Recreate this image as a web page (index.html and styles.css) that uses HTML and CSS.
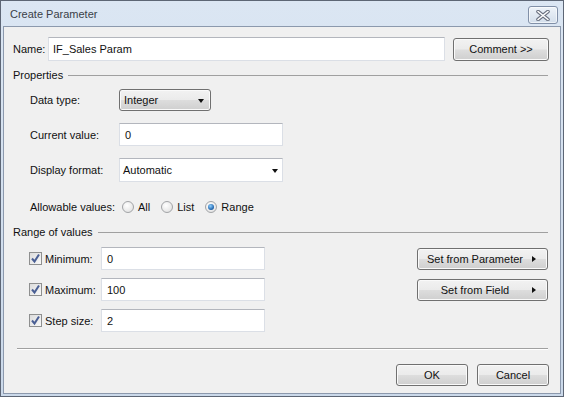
FILE: index.html
```html
<!DOCTYPE html>
<html lang="en">
<head>
  <meta charset="UTF-8" />
  <title>Create Parameter</title>
  <link rel="stylesheet" href="styles.css">
</head>
<body>

  <div class="window">

    <!-- Title bar -->
    <div class="titlebar">
      <span class="title">Create Parameter</span>
      <button class="close-btn">
        <svg width="16" height="11" viewBox="0 0 16 11">
          <path d="M3 1.5 L13 9.5 M13 1.5 L3 9.5" stroke="#6a7180" stroke-width="3.6" stroke-linecap="round" fill="none"/>
          <path d="M3 1.5 L13 9.5 M13 1.5 L3 9.5" stroke="#ffffff" stroke-width="1.6" stroke-linecap="round" fill="none"/>
        </svg>
      </button>
    </div>

    <!-- Dialog body -->
    <div class="client">

      <div class="name-row">
        <label class="name-label">Name:</label>
        <div class="textbox name-input">IF_Sales Param</div>
        <button class="btn comment-btn">Comment &gt;&gt;</button>
      </div>

      <div class="group-head props-head">
        <span>Properties</span>
        <div class="group-line"></div>
      </div>

      <div class="field-row datatype-row">
        <label class="field-label">Data type:</label>
        <div class="combo-btn">Integer<span class="arrow-down"></span></div>
      </div>

      <div class="field-row current-row">
        <label class="field-label">Current value:</label>
        <div class="textbox short">0</div>
      </div>

      <div class="field-row display-row">
        <label class="field-label">Display format:</label>
        <div class="textbox short dropdown">Automatic<span class="arrow-down"></span></div>
      </div>

      <div class="field-row allow-row">
        <label class="field-label">Allowable values:</label>
        <div class="radios">
          <span class="radio"></span><span class="radio-text">All</span>
          <span class="radio"></span><span class="radio-text">List</span>
          <span class="radio checked"></span><span class="radio-text">Range</span>
        </div>
      </div>

      <div class="group-head range-head">
        <span>Range of values</span>
        <div class="group-line"></div>
      </div>

      <div class="range-row first">
        <div class="check-label">
          <span class="checkbox">
            <svg width="11" height="11" viewBox="0 0 11 11"><path d="M2 5.5 L4.5 8.5 L9 1.5" stroke="#4a5f94" stroke-width="2" fill="none"/></svg>
          </span>
          <span>Minimum:</span>
        </div>
        <div class="textbox short">0</div>
        <button class="btn side-btn"><span class="side-text">Set from Parameter</span><span class="arrow-right"></span></button>
      </div>

      <div class="range-row">
        <div class="check-label">
          <span class="checkbox">
            <svg width="11" height="11" viewBox="0 0 11 11"><path d="M2 5.5 L4.5 8.5 L9 1.5" stroke="#4a5f94" stroke-width="2" fill="none"/></svg>
          </span>
          <span>Maximum:</span>
        </div>
        <div class="textbox short">100</div>
        <button class="btn side-btn"><span class="side-text">Set from Field</span><span class="arrow-right"></span></button>
      </div>

      <div class="range-row">
        <div class="check-label">
          <span class="checkbox">
            <svg width="11" height="11" viewBox="0 0 11 11"><path d="M2 5.5 L4.5 8.5 L9 1.5" stroke="#4a5f94" stroke-width="2" fill="none"/></svg>
          </span>
          <span>Step size:</span>
        </div>
        <div class="textbox short">2</div>
      </div>

      <div class="separator"></div>

      <div class="footer">
        <button class="btn footer-btn">OK</button>
        <button class="btn footer-btn">Cancel</button>
      </div>

    </div>
  </div>

</body>
</html>
```

FILE: styles.css
```css
* {
  margin: 0;
  padding: 0;
  box-sizing: border-box;
  font-family: 'Liberation Sans', Arial, sans-serif;
}

body {
  width: 564px;
  height: 397px;
  overflow: hidden;
  background: #f0f0f0;
}

.window {
  width: 564px;
  height: 397px;
  border: 1px solid #5d6675;
  background: linear-gradient(to bottom, #dbe6f3, #cbd9ea);
  padding: 0 2px 2px 2px;
  display: flex;
  flex-direction: column;
}

/* Title bar */
.titlebar {
  height: 25px;
  display: flex;
  align-items: center;
  justify-content: space-between;
  padding: 0 3px 0 7px;
}

.title {
  font-size: 11px;
  color: #3a3f47;
}

.close-btn {
  width: 30px;
  height: 18px;
  margin-top: 3px;
  border: 1px solid #8190a8;
  border-radius: 3px;
  background: linear-gradient(to bottom, #eef3f9, #d3deeb);
  display: flex;
  align-items: center;
  justify-content: center;
  box-shadow: inset 0 0 0 1px rgba(255, 255, 255, 0.6);
}

/* Client area */
.client {
  flex: 1;
  background: #f0f0f0;
  border: 1px solid #8c99ad;
  padding: 0 11px 0 9px;
  font-size: 11px;
  color: #111;
  white-space: nowrap;
}

.name-row {
  margin-top: 10px;
  height: 24px;
  display: flex;
  align-items: center;
}

.name-label {
  width: 35px;
}

.textbox {
  height: 23px;
  background: white;
  border: 1px solid #dbdfe6;
  border-top-color: #b3b6bd;
  padding: 0 5px;
  display: flex;
  align-items: center;
  position: relative;
}

.name-input {
  width: 397px;
  height: 24px;
  padding-left: 4px;
}

.btn {
  font-size: 11px;
  color: #111;
  border: 1px solid #707070;
  border-radius: 3px;
  background: linear-gradient(to bottom, #f2f2f2 0%, #ebebeb 48%, #dddddd 52%, #cfcfcf 100%);
  box-shadow: inset 0 0 0 1px #fafafa;
}

.comment-btn {
  width: 96px;
  height: 23px;
  margin-left: 8px;
}

/* Group headers */
.group-head {
  height: 14px;
  display: flex;
  align-items: center;
  gap: 5px;
}

.group-line {
  flex: 1;
  border-top: 1px solid #a0a0a0;
  margin-right: 1px;
}

.props-head {
  margin-top: 7px;
}

.range-head {
  margin-top: 9px;
}

/* Property rows */
.field-row {
  display: flex;
  align-items: center;
  padding-left: 17px;
}

.field-label {
  width: 89px;
}

.datatype-row {
  margin-top: 7px;
  height: 22px;
}

.combo-btn {
  width: 92px;
  height: 22px;
  border: 1px solid #707070;
  border-radius: 3px;
  background: linear-gradient(to bottom, #f2f2f2 0%, #ebebeb 48%, #dddddd 52%, #cfcfcf 100%);
  box-shadow: inset 0 0 0 1px #fafafa;
  padding-left: 4px;
  display: flex;
  align-items: center;
  position: relative;
}

.arrow-down {
  position: absolute;
  top: 9px;
  right: 6px;
  border-left: 3.5px solid transparent;
  border-right: 3.5px solid transparent;
  border-top: 4px solid #111;
}

.current-row {
  margin-top: 12px;
  height: 23px;
}

.short {
  width: 164px;
}

.display-row {
  margin-top: 12px;
  height: 24px;
}

.dropdown {
  height: 24px;
  padding-left: 3px;
}

.dropdown .arrow-down {
  top: 10px;
  right: 4px;
}

.allow-row {
  margin-top: 16px;
  height: 18px;
}

.radios {
  display: flex;
  align-items: center;
  padding-left: 3px;
}

.radio {
  width: 12px;
  height: 12px;
  border-radius: 50%;
  border: 1px solid #a2a4a7;
  background: radial-gradient(circle at 40% 35%, #ffffff, #dcdcdc);
  margin-right: 4px;
  position: relative;
}

.radio.checked::after {
  content: '';
  position: absolute;
  left: 2px;
  top: 2px;
  width: 6px;
  height: 6px;
  border-radius: 50%;
  background: radial-gradient(circle at 40% 35%, #8fd0ff, #1b5fa8 70%, #15406f);
}

.radio-text {
  margin-right: 11px;
}

/* Range rows */
.range-row {
  height: 23px;
  margin-top: 8px;
  display: flex;
  align-items: center;
  padding-left: 16px;
}

.check-label {
  width: 72px;
  display: flex;
  align-items: center;
  gap: 3px;
}

.checkbox {
  width: 13px;
  height: 13px;
  border: 1px solid #8e8f8f;
  background: linear-gradient(to bottom right, #dcdcdc, #f8f8f8);
  display: flex;
  align-items: center;
  justify-content: center;
}

.side-btn {
  width: 131px;
  height: 22px;
  margin-left: auto;
  margin-right: 1px;
  display: flex;
  align-items: center;
  padding-right: 11px;
}

.side-text {
  flex: 1;
  text-align: center;
}

.arrow-right {
  border-top: 3.5px solid transparent;
  border-bottom: 3.5px solid transparent;
  border-left: 4px solid #111;
}

/* Bottom */
.separator {
  margin: 16px 1px 0 4px;
  border-top: 1px solid #a0a0a0;
  border-bottom: 1px solid #ffffff;
}

.footer {
  margin-top: 14px;
  display: flex;
  justify-content: flex-end;
  gap: 9px;
}

.footer-btn {
  width: 72px;
  height: 22px;
}
```
